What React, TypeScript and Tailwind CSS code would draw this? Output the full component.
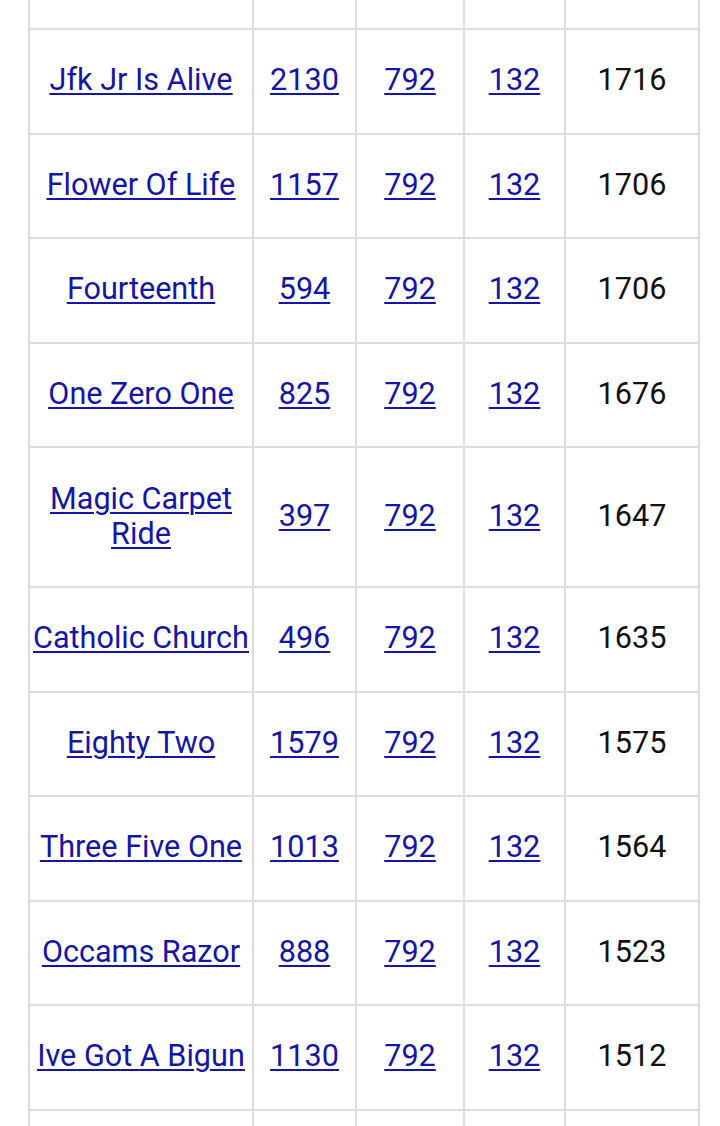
import React from "react";

type Row = { name: string[]; a: string; b: string; c: string; total: string; tall?: boolean };

const rows: Row[] = [
  { name: ["Jfk Jr Is Alive"], a: "2130", b: "792", c: "132", total: "1716" },
  { name: ["Flower Of Life"], a: "1157", b: "792", c: "132", total: "1706" },
  { name: ["Fourteenth"], a: "594", b: "792", c: "132", total: "1706" },
  { name: ["One Zero One"], a: "825", b: "792", c: "132", total: "1676" },
  { name: ["Magic Carpet", "Ride"], a: "397", b: "792", c: "132", total: "1647", tall: true },
  { name: ["Catholic Church"], a: "496", b: "792", c: "132", total: "1635" },
  { name: ["Eighty Two"], a: "1579", b: "792", c: "132", total: "1575" },
  { name: ["Three Five One"], a: "1013", b: "792", c: "132", total: "1564" },
  { name: ["Occams Razor"], a: "888", b: "792", c: "132", total: "1523" },
  { name: ["Ive Got A Bigun"], a: "1130", b: "792", c: "132", total: "1512" },
];

const cols = "grid grid-cols-[224px_103px_108px_101px_134px]";
const cell = "border-l-2 border-[#dddddd] flex items-center justify-center text-center pb-[3px]";
const link = "text-[#1515a6] underline decoration-2 underline-offset-[3px]";

export default function App() {
  return (
    <div
      className="w-[720px] h-[1126px] overflow-hidden bg-white"
      style={{ fontFamily: "Roboto, 'Noto Sans', sans-serif" }}
    >
      <div className="ml-[28px] w-[672px] border-r-2 border-[#dddddd] text-[30.6px] leading-[35px]">
        <div className={`${cols} h-[28px]`}>
          {[0, 1, 2, 3, 4].map((i) => (
            <div key={i} className={cell} />
          ))}
        </div>
        {rows.map((r, idx) => (
          <div
            key={idx}
            className={`${cols} border-t-2 border-[#dddddd] ${r.tall ? "h-[140px]" : "h-[104.5px]"}`}
          >
            <div className={cell}>
              <a className={`${link} block`}>
                {r.name.map((n, j) => (
                  <span key={j} className="block">
                    <span className="underline decoration-2 underline-offset-[3px]">{n}</span>
                  </span>
                ))}
              </a>
            </div>
            <div className={cell}>
              <a className={link}>{r.a}</a>
            </div>
            <div className={cell}>
              <a className={link}>{r.b}</a>
            </div>
            <div className={cell}>
              <a className={link}>{r.c}</a>
            </div>
            <div className={`${cell} text-[#111111]`}>{r.total}</div>
          </div>
        ))}
        <div className={`${cols} border-t-2 border-[#dddddd] h-[60px]`}>
          {[0, 1, 2, 3, 4].map((i) => (
            <div key={i} className={cell} />
          ))}
        </div>
      </div>
    </div>
  );
}
